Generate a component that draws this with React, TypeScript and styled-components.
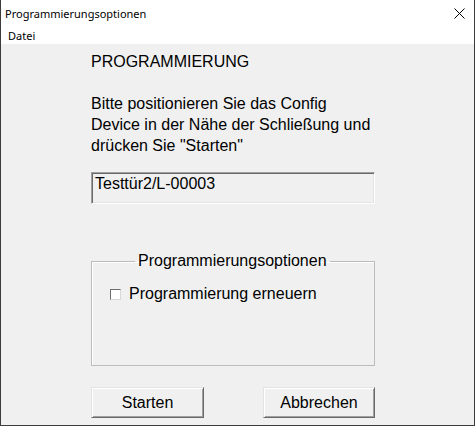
import React from "react";
import styled, { createGlobalStyle } from "styled-components";

const GlobalStyle = createGlobalStyle`
  html, body {
    margin: 0;
    padding: 0;
    background: #ffffff;
  }
  body {
    font-family: "Liberation Sans", Arial, sans-serif;
  }
`;

const Window = styled.div`
  width: 475px;
  height: 426px;
  box-sizing: border-box;
  border: 1px solid #3c3c3c;
  border-top: none;
  display: flex;
  flex-direction: column;
  background: #ffffff;
  overflow: hidden;
`;

const TitleBar = styled.div`
  height: 27px;
  display: flex;
  align-items: center;
  justify-content: space-between;
  padding: 0 9px 0 4px;
  font-family: "Noto Sans", "Open Sans", sans-serif;
  font-size: 11px;
  color: #000000;
`;

const CloseButton = styled.div`
  width: 12px;
  height: 12px;
  display: flex;
  align-items: center;
  justify-content: center;
  margin-top: -1px;
`;

const MenuBar = styled.div`
  height: 17px;
  display: flex;
  align-items: center;
  padding-left: 7px;
  font-family: "Noto Sans", "Open Sans", sans-serif;
  font-size: 11px;
  color: #000000;
`;

const Body = styled.div`
  flex: 1;
  background: #f0f0f0;
  padding: 9px 0 0 90px;
  color: #000000;
  font-size: 16px;
`;

const Column = styled.div`
  width: 284px;
  display: flex;
  flex-direction: column;
`;

const Heading = styled.div`
  line-height: 18px;
`;

const Paragraph = styled.div`
  margin-top: 22px;
  line-height: 21px;
`;

const ReadOnlyField = styled.div`
  margin-top: 16px;
  height: 32px;
  box-sizing: border-box;
  border: 1px solid;
  border-color: #a0a0a0 #ffffff #ffffff #a0a0a0;
  box-shadow: inset 1px 1px #696969, inset -1px -1px #e3e3e3;
  padding: 2px 3px 0;
  line-height: 17px;
  background: #f0f0f0;
`;

const GroupBox = styled.fieldset`
  margin: 48px 0 0;
  padding: 0;
  border: 1px solid #bcbcbc;
  box-shadow: inset 1px 1px #ffffff;
  min-width: 0;
`;

const GroupLegend = styled.legend`
  margin-left: 43px;
  padding: 0 3px;
  line-height: 18px;
`;

const GroupContent = styled.div`
  height: 95px;
  padding: 15px 0 0 18px;
  box-sizing: border-box;
`;

const CheckRow = styled.label`
  display: flex;
  align-items: center;
  gap: 8px;
  line-height: 18px;
`;

const CheckBox = styled.span`
  width: 11px;
  height: 11px;
  box-sizing: border-box;
  border: 1px solid;
  border-color: #6d6d6d #d8d8d8 #d8d8d8 #6d6d6d;
  background: #ffffff;
  flex-shrink: 0;
`;

const ButtonRow = styled.div`
  margin-top: 21px;
  display: flex;
  justify-content: space-between;
`;

const Button = styled.button<{ $width: number }>`
  width: ${(p) => p.$width}px;
  height: 31px;
  box-sizing: border-box;
  border: 1px solid;
  border-color: #e3e3e3 #696969 #696969 #e3e3e3;
  box-shadow: inset 1px 1px #ffffff, inset -1px -1px #a0a0a0;
  background: #f0f0f0;
  font-family: "Liberation Sans", Arial, sans-serif;
  font-size: 16px;
  color: #000000;
  padding: 0;
`;

export default function App() {
  return (
    <>
      <GlobalStyle />
      <Window>
        <TitleBar>
          <span>Programmierungsoptionen</span>
          <CloseButton>
            <svg width="11" height="11" viewBox="0 0 11 11">
              <path d="M0.5 0.5 L10.5 10.5 M10.5 0.5 L0.5 10.5" stroke="#000" strokeWidth="1" />
            </svg>
          </CloseButton>
        </TitleBar>
        <MenuBar>Datei</MenuBar>
        <Body>
          <Column>
            <Heading>PROGRAMMIERUNG</Heading>
            <Paragraph>
              Bitte positionieren Sie das Config
              <br />
              Device in der Nähe der Schließung und
              <br />
              drücken Sie "Starten"
            </Paragraph>
            <ReadOnlyField>Testtür2/L-00003</ReadOnlyField>
            <GroupBox>
              <GroupLegend>Programmierungsoptionen</GroupLegend>
              <GroupContent>
                <CheckRow>
                  <CheckBox />
                  Programmierung erneuern
                </CheckRow>
              </GroupContent>
            </GroupBox>
            <ButtonRow>
              <Button $width={113}>Starten</Button>
              <Button $width={112}>Abbrechen</Button>
            </ButtonRow>
          </Column>
        </Body>
      </Window>
    </>
  );
}
